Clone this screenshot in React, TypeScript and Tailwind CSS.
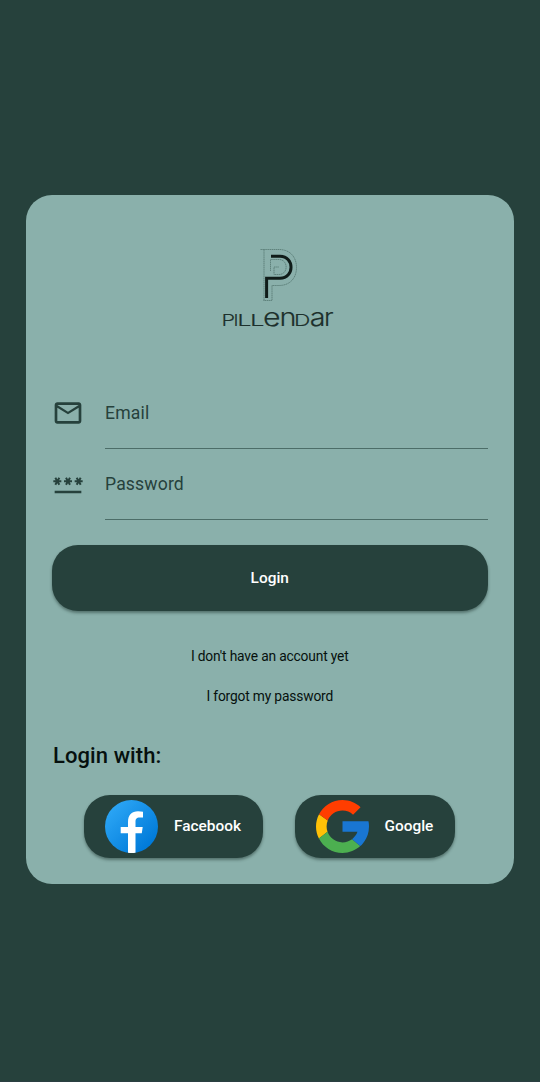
import type { ReactNode } from "react";

const wordmark = [
  { char: "P", x: 221.6, width: 13.6, size: 16.5 },
  { char: "I", x: 233.6, width: 5, size: 16.5 },
  { char: "L", x: 237.2, width: 14.3, size: 16.5 },
  { char: "L", x: 250, width: 14.5, size: 16.5 },
  { char: "e", x: 263.1, width: 17.6, size: 25 },
  { char: "n", x: 279.6, width: 17, size: 25 },
  { char: "D", x: 293.9, width: 16.4, size: 16.5 },
  { char: "a", x: 309.7, width: 15.8, size: 24.5 },
  { char: "r", x: 324, width: 9.6, size: 24.5 },
];

function Logo() {
  return (
    <svg className="block h-[94px] w-[120px] shrink-0 overflow-visible" viewBox="218 246 120 94" fill="none" role="img" aria-label="Pillendar">
      <g stroke="#41635d" strokeWidth="0.6" strokeDasharray="1.400 0.5">
        <path d="M260.5 249.5H279C290 249.5 296.5 257 296.5 267.5S290 285.5 279 285.5H272V300.5H263.5" />
        <path d="M264 249.5V300.5" />
        <path d="M270.500 271V259.500H279C288.500 259.500 288.500 274.500 279 274.500H274V267H279" />
      </g>
      <path d="M271 256.300H280C294.700 256.300 294.700 278.200 280 278.200H266.600V298" stroke="#101c19" strokeWidth="3" />
      <g fill="#1d302c" stroke="#1d302c" strokeWidth="0.15" fontFamily="Inter, 'Liberation Sans', sans-serif" fontWeight="300">
        {wordmark.map(({ char, x, width, size }) => (
          <text key={x} x={x} y="326" fontSize={size} textLength={width} lengthAdjust="spacingAndGlyphs">
            {char}
          </text>
        ))}
      </g>
    </svg>
  );
}

function MailIcon() {
  return (
    <svg className="size-8" viewBox="0 0 24 24" fill="#26413c">
      <path d="M22 6c0-1.1-.9-2-2-2H4c-1.1 0-2 .9-2 2v12c0 1.1.9 2 2 2h16c1.100 0 2-.9 2-2V6zm-2 0l-8 5-8-5h16zm0 12H4V8l8 5 8-5v10z" />
    </svg>
  );
}

function PasswordIcon() {
  return (
    <svg className="size-8" viewBox="0 0 24 24" fill="#26413c">
      <path d="M2 17h20v2H2v-2zm1.150-4.050L4 11.470l.85 1.480 1.300-.75-.85-1.480H7v-1.500H5.300l.85-1.470L4.850 7 4 8.470 3.150 7l-1.300.75.85 1.470H1v1.500h1.700l-.85 1.480 1.300.75zm6.700-.75l1.300.75.85-1.480.85 1.480 1.300-.75-.85-1.480H15v-1.500h-1.700l.85-1.470-1.300-.75L12 8.470 11.150 7l-1.300.75.85 1.470H9v1.500h1.700l-.85 1.480zM23 9.220h-1.700l.85-1.470-1.300-.75L20 8.470 19.150 7l-1.300.75.85 1.470H17v1.500h1.700l-.85 1.480 1.300.75.85-1.480.85 1.480 1.300-.75-.85-1.480H23v-1.500z" />
    </svg>
  );
}

function FacebookIcon() {
  return (
    <svg className="size-[53px] shrink-0" viewBox="0 0 53 53">
      <defs>
        <linearGradient id="fb" x1="0.15" y1="0.15" x2="0.85" y2="0.85">
          <stop offset="0" stopColor="#2aa4f4" />
          <stop offset="1" stopColor="#007ad9" />
        </linearGradient>
      </defs>
      <circle cx="26.500" cy="26.500" r="26.500" fill="url(#fb)" />
      <path fill="#fff" d="M23 52.700V33.200H15.700V26.900H23V22C23 15 26.800 11.300 33 11.300C35 11.300 36.700 11.500 38 11.700V17.600H34.800C31.300 17.600 30.500 19.400 30.500 22V26.900H37.700L36.800 33.200H30.500V52.700Q26.500 53.300 23 52.700Z" />
    </svg>
  );
}

function GoogleIcon() {
  return (
    <svg className="size-[53px] shrink-0" viewBox="4 4 40 40">
      <path fill="#FFC107" d="M12.877 19.510L6.306 14.691C4.830 17.480 4 20.640 4 24c0 3.250.78 6.330 2.195 9.079l6.522-5.025C12.250 26.790 12 25.420 12 24c0-1.590.31-3.110.877-4.490z" />
      <path fill="#FF3D00" d="M6.306 14.691l6.571 4.819C14.655 15.108 18.961 12 24 12c3.059 0 5.842 1.154 7.961 3.039l5.657-5.657C34.046 6.053 29.268 4 24 4 16.318 4 9.656 8.337 6.306 14.691z" />
      <path fill="#4CAF50" d="M24 44c5.166 0 9.860-1.977 13.409-5.192l-6.190-5.238C29.211 35.091 26.715 36 24 36c-5.202 0-9.619-3.317-11.283-7.946l-6.522 5.025C9.505 39.556 16.227 44 24 44z" />
      <path fill="#1976D2" d="M43.611 20.083H42V20H24v8h11.303c-.792 2.237-2.231 4.166-4.087 5.571l6.193 5.238C36.971 39.205 44 34 44 24c0-1.341-.138-2.650-.389-3.917z" />
    </svg>
  );
}

function Field({ icon, label }: { icon: ReactNode; label: string }) {
  return (
    <label className="flex h-[70.500px] items-start">
      <span className="flex h-[70px] w-[53px] items-center">{icon}</span>
      <span className="flex h-[71px] flex-1 items-center border-b border-[#4c6d68] pt-[2px] text-[17.600px] leading-none tracking-[0.15px] text-[#26413c]">
        {label}
      </span>
    </label>
  );
}

const raised = "bg-[#26413c] text-[15.400px] font-medium text-white shadow-[0_2px_3px_rgba(20,40,36,0.45)]";

export default function App() {
  return (
    <main className="flex h-[1082px] w-[540px] flex-col border-b border-[#2b3f42] bg-[#26413c] px-[26px] pt-[195px] font-[Roboto,sans-serif]">
      <section className="flex h-[688.500px] w-[487.500px] flex-col rounded-[26px] bg-[#8ab0ab] px-[26px] pt-[51px]">
        <div className="flex h-[132px] shrink-0 justify-center pl-[16px]">
          <Logo />
        </div>
        <Field icon={<MailIcon />} label="Email" />
        <Field icon={<PasswordIcon />} label="Password" />
        <button className={`mt-[26px] flex h-[66px] w-full shrink-0 items-center justify-center rounded-[26px] pt-[2px] ${raised}`}>
          Login
        </button>
        <div className="mt-[26px] flex flex-col text-center text-[13.800px] tracking-[-0.170px] text-[#06100e]">
          <a className="h-[39.500px] leading-[39px]">I don't have an account yet</a>
          <a className="h-[39.500px] leading-[38px]">I forgot my password</a>
        </div>
        <h2 className="mt-[25px] pl-px text-[22px] leading-[30px] font-medium tracking-[0.08px] text-[#06100e]">Login with:</h2>
        <div className="mt-[24px] flex gap-8 pl-8">
          <button className={`flex h-[63px] w-[179px] items-center gap-4 rounded-[26px] pl-[21px] ${raised}`}>
            <FacebookIcon />
            Facebook
          </button>
          <button className={`flex h-[63px] w-[160px] items-center gap-[15.500px] rounded-[26px] pl-[21px] ${raised}`}>
            <GoogleIcon />
            Google
          </button>
        </div>
      </section>
    </main>
  );
}
